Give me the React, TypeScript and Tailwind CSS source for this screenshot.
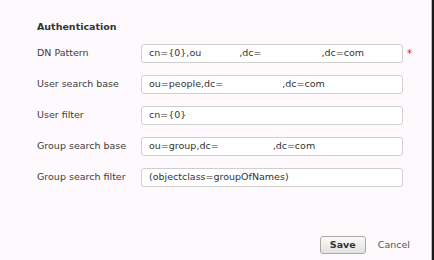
const Field: React.FC<{ label: string; required?: boolean; children: React.ReactNode }> = ({ label, required, children }) => {
    return (
        <div className="flex items-center h-[19px]">
            <label className="w-[104px] shrink-0 text-[#3c3c3c]">{label}</label>
            <div className="flex items-center w-[262px] h-[19px] px-[7px] bg-white border border-[#cfcfcf] rounded-[3px] text-[#333] whitespace-nowrap overflow-hidden">
                {children}
            </div>
            {required && <span className="ml-[4px] text-[#e8102a] text-[10px] leading-none">*</span>}
        </div>
    );
};

export default function App() {
    return (
        <div className="flex w-[434px] h-[260px] bg-[#fdf9fd] font-['DejaVu_Sans',sans-serif] text-[9.5px]">
            <div className="flex flex-col flex-1 pl-[37px] pt-[21px]">
                <h2 className="font-bold text-[#333] text-[9.5px] leading-[12px]">Authentication</h2>
                <div className="flex flex-col gap-[12px] mt-[11px]">
                    <Field label="DN Pattern" required>
                        <span>cn={"{0}"},ou</span>
                        <span className="ml-[38px]">,dc=</span>
                        <span className="ml-[60px]">,dc=com</span>
                    </Field>
                    <Field label="User search base">
                        <span>ou=people,dc=</span>
                        <span className="ml-[59px]">,dc=com</span>
                    </Field>
                    <Field label="User filter">
                        <span>cn={"{0}"}</span>
                    </Field>
                    <Field label="Group search base">
                        <span>ou=group,dc=</span>
                        <span className="ml-[54px]">,dc=com</span>
                    </Field>
                    <Field label="Group search filter">
                        <span>(objectclass=groupOfNames)</span>
                    </Field>
                </div>
                <div className="flex items-center justify-end mt-auto mb-[6px] mr-[21px] gap-[12px]">
                    <button className="w-[46px] h-[18px] rounded-[3px] border border-[#a9a9a9] bg-gradient-to-b from-[#fafafa] to-[#e2e2e2] font-bold text-[#333]">
                        Save
                    </button>
                    <a href="#" className="text-[#555]">Cancel</a>
                </div>
            </div>
            <div className="w-[3px] h-full border-l border-[#bbb] bg-[#1a1a1a]"></div>
        </div>
    );
}
